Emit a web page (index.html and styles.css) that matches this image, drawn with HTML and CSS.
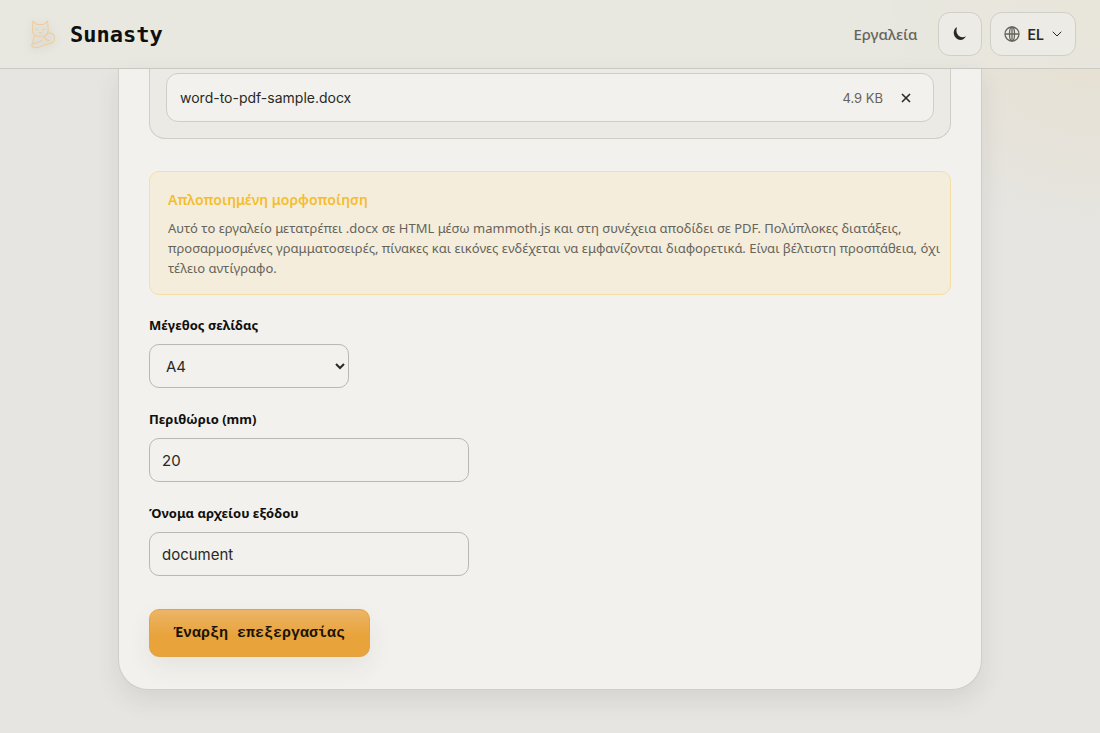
FILE: index.html
```
<!DOCTYPE html>
<html lang="el">
<head>
	<meta charset="UTF-8">
	<meta name="viewport" content="width=device-width, initial-scale=1.0">
	<title>Sunasty</title>
	<link rel="stylesheet" href="styles.css">
</head>
<body>

	<header class="header">
		<a href="#" class="brand">
			<svg class="brand__logo" viewBox="0 0 32 32" fill="none" stroke="currentColor" stroke-linejoin="round" stroke-linecap="round">
				<path d="M8 4.500l3.500 3h6l3.500-3 .5 8c0 3-2 5-4.500 5.500h-5c-2.500-.5-4.500-2.500-4.500-5.500z"/>
				<path d="M10.500 11.500l2 1M18.500 11.500l-2 1M13.500 14.500l1 1 1-1"/>
				<path d="M9.500 17.500c-1.500 3-2 4-1.500 7 3 0 5-1 8-3M19 18c2-4 7-3.500 8 0 .7 4-1 6-4 6.500-4 0-7 2.500-11 3.500-4 .5-6-1-4.500-3.500M18 19c1 2 3 3 5 3"/>
			</svg>
			<span class="brand__name" lang="en">Sunasty</span>
		</a>
		<nav class="nav">
			<a href="#" class="nav__link">Εργαλεία</a>
			<button class="nav__btn nav__btn--icon" type="button" aria-label="Σκούρο θέμα">
				<svg width="16" height="16" viewBox="0 0 16 16" fill="currentColor"><path d="M4.200 1.500C1 4 1 9 4 12c3 3 8 2.500 10-1.700-3 1.500-6 1-7.800-1C4.300 7 4 4.500 5 1.600z"/></svg>
			</button>
			<button class="nav__btn" type="button">
				<svg class="nav__globe" width="16" height="16" viewBox="0 0 16 16" fill="none" stroke="currentColor" stroke-width="1.300"><circle cx="8" cy="8" r="7"/><ellipse cx="8" cy="8" rx="2.500" ry="7"/><path d="M1 8h14M8 1v14"/></svg>
				<span lang="en">EL</span>
				<svg width="10" height="10" viewBox="0 0 10 10" fill="none" stroke="currentColor" stroke-linecap="round"><path d="M1 3l4 4 4-4"/></svg>
			</button>
		</nav>
	</header>

	<main class="card">
		<section class="files">
			<div class="file">
				<span class="file__name" lang="en">word-to-pdf-sample.docx</span>
				<span class="file__size" lang="en">4.9 KB</span>
				<button class="file__remove" type="button" aria-label="Αφαίρεση">
					<svg width="10" height="10" viewBox="0 0 10 10" stroke="currentColor" stroke-width="1.600"><path d="M1 1l8 8M9 1L1 9"/></svg>
				</button>
			</div>
		</section>

		<section class="notice">
			<h2 class="notice__title">Απλοποιημένη μορφοποίηση</h2>
			<p class="notice__text">Αυτό το εργαλείο μετατρέπει .docx σε HTML μέσω mammoth.js και στη συνέχεια αποδίδει σε PDF. Πολύπλοκες διατάξεις, προσαρμοσμένες γραμματοσειρές, πίνακες και εικόνες ενδέχεται να εμφανίζονται διαφορετικά. Είναι βέλτιστη προσπάθεια, όχι τέλειο αντίγραφο.</p>
		</section>

		<form class="form">
			<div class="field">
				<label class="field__label" for="size">Μέγεθος σελίδας</label>
				<select class="field__input field__input--select" id="size">
					<option>A4</option>
				</select>
			</div>
			<div class="field">
				<label class="field__label" for="margin">Περιθώριο (mm)</label>
				<input class="field__input" id="margin" type="text" inputmode="numeric" value="20">
			</div>
			<div class="field">
				<label class="field__label" for="name">Όνομα αρχείου εξόδου</label>
				<input class="field__input" id="name" type="text" value="document">
			</div>
			<button class="submit" type="button">Έναρξη επεξεργασίας</button>
		</form>
	</main>

</body>
</html>
```
FILE: styles.css
```
*, *::after, *::before {
	box-sizing: border-box;
}

:root {
	--text: #292925;
	--muted: #66645b;
	--line: #cfcec7;
	--surface: #f2f1ed;
}

body {
	margin: 0;
	min-height: 100vh;
	font-family: "Noto Sans", sans-serif;
	color: var(--text);
	background:
		radial-gradient(circle at 100% 0, rgba(232, 205, 150, 0.25), transparent 240px),
		#e6e5e1;
}

:lang(en) {
	font-family: Inter, sans-serif;
}

button {
	font: inherit;
	color: inherit;
	cursor: pointer;
}

.header {
	display: flex;
	justify-content: space-between;
	align-items: center;
	height: 69px;
	padding: 0 24px;
	border-bottom: 1px solid #cbcac5;
	background: rgba(232, 232, 224, 0.7);
}

.brand {
	display: flex;
	align-items: center;
	gap: 10px;
	color: #0f0f0c;
	text-decoration: none;
}

.brand__logo {
	width: 36px;
	height: 36px;
	color: #efcd9b;
	filter: drop-shadow(0 2px 4px rgba(0, 0, 0, 0.15));
}

.brand__name {
	font-family: "DejaVu Sans Mono", monospace;
	font-size: 22px;
	font-weight: bold;
}

.nav {
	display: flex;
	align-items: center;
	gap: 8px;
}

.nav__link {
	margin-right: 12px;
	font-size: 15px;
	font-weight: 500;
	color: var(--muted);
	text-decoration: none;
}

.nav__btn {
	display: flex;
	align-items: center;
	justify-content: center;
	gap: 8px;
	height: 44px;
	padding: 0 13px;
	border: 1px solid var(--line);
	border-radius: 12px;
	background: #ecebe5;
	font-size: 14px;
	font-weight: 600;
}

.nav__btn--icon {
	width: 44px;
	padding: 0;
}

.nav__globe {
	color: var(--muted);
}

.card {
	max-width: 864px;
	margin: 0 auto 43px;
	padding: 0 30px 32px;
	border: 1px solid var(--line);
	border-top: none;
	border-radius: 0 0 30px 30px;
	background: var(--surface);
	box-shadow: 0 10px 24px rgba(60, 60, 50, 0.1);
}

.files {
	padding: 4px 16px 16px;
	border: 1px solid var(--line);
	border-top: none;
	border-radius: 0 0 16px 16px;
	background: #ebeae4;
}

.file {
	display: flex;
	align-items: center;
	height: 49px;
	padding: 0 22px 0 13px;
	border: 1px solid var(--line);
	border-radius: 12px;
	background: var(--surface);
}

.file__name {
	flex: 1;
	font-size: 14px;
}

.file__size {
	font-size: 13px;
	color: var(--muted);
}

.file__remove {
	display: flex;
	margin-left: 18px;
	padding: 0;
	border: none;
	background: none;
}

.notice {
	margin-top: 32px;
	padding: 18px 8px 16px 18px;
	border: 1px solid #f5dfa4;
	border-radius: 10px;
	background: #f4eddc;
}

.notice__title {
	margin: 0 0 8px;
	font-size: 14px;
	line-height: 20px;
	font-weight: 600;
	color: #f5bd2e;
}

.notice__text {
	margin: 0;
	font-size: 13px;
	line-height: 20px;
	color: var(--muted);
}

.form {
	padding-top: 19px;
}

.field {
	display: flex;
	flex-direction: column;
	align-items: flex-start;
	gap: 8px;
	margin-bottom: 20px;
}

.field__label {
	font-size: 13px;
	line-height: 22px;
	font-weight: bold;
	color: #0f0f0c;
}

.field__input {
	width: 320px;
	max-width: 100%;
	height: 44px;
	padding: 0 12px;
	border: 1px solid #b9b8b2;
	border-radius: 10px;
	background: transparent;
	font-family: Inter, sans-serif;
	font-size: 15px;
	color: var(--text);
}

.field__input--select {
	width: 200px;
}

.submit {
	height: 48px;
	margin-top: 13px;
	padding: 0 24px;
	border: 1px solid #e3a344;
	border-radius: 10px;
	background: linear-gradient(#edb568, #e8a33b 55%);
	box-shadow: 0 10px 24px rgba(60, 60, 40, 0.07);
	font-family: "Liberation Mono", monospace;
	font-size: 15px;
	font-weight: bold;
	color: #1a1408;
}
```
